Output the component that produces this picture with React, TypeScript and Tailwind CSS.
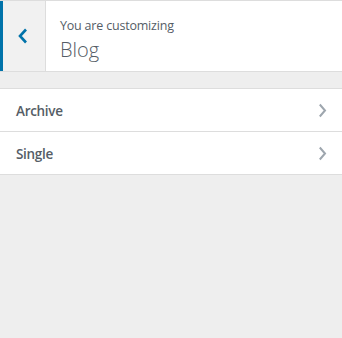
import { ReactNode } from "react";

/* ----------------------------------------------------------
   Customizer section header — back button + title
   ---------------------------------------------------------- */
function BackChevron() {
  return (
    <svg width="12" height="18" viewBox="0 0 12 18" fill="none">
      <path d="M9 2.5L3 9l6 6.5" stroke="#0073aa" strokeWidth="2.6" />
    </svg>
  );
}

function RowChevron() {
  return (
    <svg width="9" height="15" viewBox="0 0 9 15" fill="none">
      <path d="M1.8 1.5L7 7.5l-5.2 6" stroke="#9ea6ae" strokeWidth="2" />
    </svg>
  );
}

function PanelRow({ children }: { children: ReactNode }) {
  return (
    <div className="flex h-[43px] items-center justify-between border-b border-[#ddd] bg-white pl-4 pr-[15px]">
      <span className="pt-[2px] text-[13.5px] font-semibold tracking-[-0.3px] text-[#555d66]">
        {children}
      </span>
      <RowChevron />
    </div>
  );
}

export default function App() {
  return (
    <div
      className="h-[338px] w-[342px] overflow-hidden bg-[#eee]"
      style={{ fontFamily: '"Open Sans", "Noto Sans", sans-serif' }}
    >
      <div className="flex h-[72px] border-y border-[#ddd] bg-white">
        <div className="flex w-[46px] items-center justify-center border-r border-l-[3px] border-r-[#ddd] border-l-[#0073aa] bg-[#f1f1f1] pr-[2px]">
          <BackChevron />
        </div>
        <div className="flex flex-col pl-[14px] pt-[15px] text-[#555d66]">
          <span className="text-[12.5px] leading-[20px] tracking-[-0.2px]">You are customizing</span>
          <span className="text-[20px] font-light leading-[28px]">Blog</span>
        </div>
      </div>

      <div className="mt-[16px] border-t border-[#ddd]">
        <PanelRow>Archive</PanelRow>
        <PanelRow>Single</PanelRow>
      </div>
    </div>
  );
}
